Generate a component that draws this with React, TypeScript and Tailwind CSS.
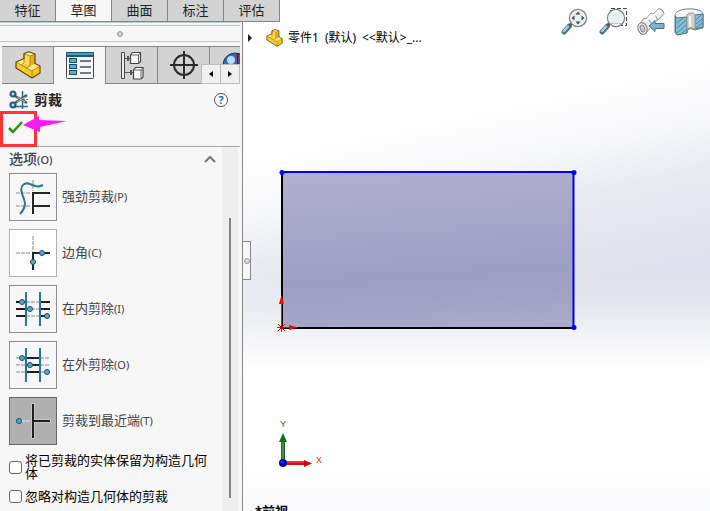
import type { ReactNode } from 'react';

const commandTabs = ['特征', '草图', '曲面', '标注', '评估'];

function PartIcon({ className }: { className: string }) {
  return (
    <svg viewBox="0 0 26 28" className={className} strokeLinejoin="round" aria-hidden="true">
      <path d="M1 11L9 7.500V2.500L14 .800L20 3V12.500L25 15V22L17 27L1 17Z" fill="#f7cb2e" />
      <path d="M1 11L9 7.500L11 8.500V13L6 14Z M11 16.500L20 12.500L25 15L17 20Z" fill="#ffe980" />
      <path d="M9 2.500L14 .800L20 3L15 5Z" fill="#fff0a2" />
      <path d="M15 5L20 3V12.500L15 15Z" fill="#e5b01c" />
      <path d="M9 2.500L15 5V15L9 12Z" fill="#fbd84b" />
      <path d="M17 20L25 15V22L17 27Z" fill="#fac619" />
      <path d="M1 11L17 20V27M17 20L25 15M9 3V12L6 14M9 2.500L15 5L20 3M15 5V15L11 17" fill="none" stroke="#a17b16" strokeWidth=".8" />
      <path d="M1 11L9 7.500V2.500L14 .800L20 3V12.500L25 15V22L17 27L1 17Z" fill="none" stroke="#5f4a12" strokeWidth="1.200" />
    </svg>
  );
}

function PropertyIcon() {
  return (
    <svg viewBox="0 0 28 27" className="h-[27px] w-7" aria-hidden="true">
      <rect x=".5" y=".5" width="27" height="26" rx="1" fill="#f5f6f6" stroke="#414950" />
      <rect x="0" y="0" width="28" height="5" fill="#1b5979" />
      <rect x="1" y="1" width="26" height="2" fill="#4d9bbd" />
      {[7, 13, 19].map((y) => (
        <g key={y}>
          <rect x="3.500" y={y - 0.5} width="7" height="4" fill="#62aacb" stroke="#184e69" />
          <path d={`M14 ${y + 2}H25`} stroke="#484f54" strokeWidth="1.500" />
        </g>
      ))}
    </svg>
  );
}

function ConfigIcon() {
  return (
    <svg viewBox="0 0 24 29" className="h-[29px] w-6" fill="none" aria-hidden="true">
      <path d="M1.500 1.500H4.500V27.500H1.500Z" fill="#eee" stroke="#444" />
      <path d="M5 7.500H10M5 21.500H13" stroke="#555" />
      <path d="M10.500 4L12.500 1.500H20.500V10.500L18.500 12.500H10.500Z M13.500 19L15.500 16.500H23V26L21 28H13.500Z" fill="#fafafa" stroke="#444" strokeWidth="1.200" />
      <path d="M11 4H18.500V12M18.500 4L20.500 1.500M14 19H21V27M21 19L23 16.500" stroke="#666" />
      <path d="M8 5V10M11 19V24" stroke="#555" strokeWidth="2" />
    </svg>
  );
}

function TargetIcon() {
  return (
    <svg viewBox="0 0 28 28" className="size-7" fill="none" stroke="#292b2d" strokeWidth="2" aria-hidden="true">
      <circle cx="14" cy="14" r="10" />
      <path d="M14 0V28M0 14H28" />
    </svg>
  );
}

function TrimIcon() {
  return (
    <svg viewBox="0 0 20 20" className="size-5" fill="none" aria-hidden="true">
      <path d="M13.500 1V19M2 16.500H19" stroke="#286a87" strokeWidth="1.500" />
      <path d="M6 6L18 13M6 13L18 5" stroke="#4d5357" strokeWidth="2.500" />
      <path d="M8 7L16 12M8 12L16 7" stroke="#d4d8da" strokeWidth=".8" />
      <circle cx="4" cy="4" r="2.500" fill="#c5dce6" stroke="#225c79" strokeWidth="2.200" />
      <circle cx="4" cy="15" r="2.500" fill="#c5dce6" stroke="#225c79" strokeWidth="2.200" />
      <path d="M14 9.500H20" stroke="#777" strokeDasharray="2 1" />
    </svg>
  );
}

function Dot({ x, y }: { x: number; y: number }) {
  return <circle cx={x} cy={y} r="2.500" fill="#58a9cd" stroke="#174f6b" />;
}

const glyphs: Record<string, ReactNode> = {
  power: (
    <>
      <path d="M24 7V18M7 20H22M7 33H22" stroke="#c2c2c2" strokeWidth="2" strokeDasharray="4 1" />
      <path d="M24 41V20H41M24 33H41" stroke="#242424" strokeWidth="2" />
      <path d="M11 41C16 36 17 31 15 26C12 19 11 14 14 12C18 8 22 12 26 13C29 14 32 13 34 12" stroke="#28779b" strokeWidth="2" />
    </>
  ),
  corner: (
    <>
      <path d="M24 7V23M7 24H22" stroke="#c2c2c2" strokeWidth="2" strokeDasharray="4 1" />
      <path d="M24 41V24H41" stroke="#242424" strokeWidth="2" />
      <Dot x={33} y={24} /><Dot x={24} y={33} />
    </>
  ),
  inside: (
    <>
      <path d="M17 17H31M17 24H31M17 31H31" stroke="#c2c2c2" strokeWidth="2" strokeDasharray="4 1" />
      <path d="M7 17H17M31 17H41M7 24H17M31 24H41M7 31H17M31 31H41" stroke="#202020" strokeWidth="2" />
      <path d="M17 7V41M31 7V41" stroke="#28779b" strokeWidth="2" />
      <Dot x={13} y={17} /><Dot x={21} y={24} /><Dot x={38} y={31} />
    </>
  ),
  outside: (
    <>
      <path d="M7 17H17M31 17H41M7 24H17M31 24H41M7 31H17M31 31H41" stroke="#c2c2c2" strokeWidth="2" strokeDasharray="4 1" />
      <path d="M17 17H31M17 24H31M17 31H31" stroke="#202020" strokeWidth="2" />
      <path d="M17 7V41M31 7V41" stroke="#28779b" strokeWidth="2" />
      <Dot x={13} y={17} /><Dot x={21} y={24} /><Dot x={38} y={31} />
    </>
  ),
  nearest: (
    <>
      <path d="M24 6V42M24 24H42" stroke="#c7c7c7" strokeWidth="4" />
      <path d="M12 24H22" stroke="#d0d0d0" strokeWidth="2" strokeDasharray="4 1" />
      <path d="M24 7V41M24 24H41" stroke="#202020" strokeWidth="2" />
      <Dot x={10} y={24} />
    </>
  ),
};

const trimModes = [
  { id: 'power', label: '强劲剪裁', hotkey: '(P)', tile: 'border-[#8e8e8e]' },
  { id: 'corner', label: '边角', hotkey: '(C)', tile: 'border-[#b0b0b0] bg-white' },
  { id: 'inside', label: '在内剪除', hotkey: '(I)', tile: 'border-[#8e8e8e]' },
  { id: 'outside', label: '在外剪除', hotkey: '(O)', tile: 'border-[#8e8e8e]' },
  { id: 'nearest', label: '剪裁到最近端', hotkey: '(T)', tile: 'border-[#666] bg-[#b0b0b0]' },
];

function Magnifier({ area }: { area?: boolean }) {
  return (
    <svg viewBox="0 0 30 28" className="h-7 w-[30px]" fill="none" aria-hidden="true">
      {area && <path d="M12.500 6V.500H28.500V17.500H23" stroke="#444" strokeDasharray="4 2" />}
      <path d="M9.500 18L4 24" stroke="#4a7282" strokeWidth="5" strokeLinecap="round" />
      <path d="M8 18.500L4 23" stroke="#9ed2e5" strokeWidth="2.500" strokeLinecap="round" />
      <path d="M9.500 18L12 15" stroke="#555" strokeWidth="2.500" />
      <circle cx="18" cy="10" r="8.500" fill="#e7eff1" stroke="#818688" strokeWidth="1.500" />
      <circle cx="18" cy="10" r="7.200" stroke="#fafafa" />
      {!area && <path d="M18 3.500L15.500 6.500H20.500ZM18 16.500L15.500 13.500H20.500ZM11.500 10L14.500 7.500V12.500ZM24.500 10L21.500 7.500V12.500Z" fill="#454d51" />}
      {area && <path d="M13 15.500H23" stroke="#b6babc" strokeDasharray="3 1" />}
    </svg>
  );
}

function PreviousViewIcon() {
  return (
    <svg viewBox="0 0 30 28" className="h-7 w-[30px]" strokeLinejoin="round" aria-hidden="true">
      <path d="M14 9L23 .500Q27 1 28 5.500L21 13Z" fill="#eee" stroke="#8b8b8b" />
      <path d="M8 13L15 5Q20 6 21.500 12L14 19Z" fill="#f3f3f3" stroke="#999" />
      <path d="M2 18L8 10Q15 11 16 18L9 26Z" fill="#eee" stroke="#8b8b8b" />
      <path d="M10 13L16 7M17 8L24 2" stroke="#fff" strokeWidth="2" />
      <ellipse cx="6.500" cy="20.500" rx="4.500" ry="6" fill="#f5f5f5" stroke="#777" transform="rotate(-20 6.500 20.500)" />
      <ellipse cx="6.500" cy="20.500" rx="2.200" ry="3.500" fill="#ccc" stroke="#888" transform="rotate(-20 6.500 20.500)" />
      <path d="M13 18L19 12.500V15.500H28V20.500H19V23.500Z" fill="#79b5cf" stroke="#496f80" />
    </svg>
  );
}

function SectionIcon() {
  return (
    <svg viewBox="0 0 30 28" className="h-7 w-[30px]" strokeLinejoin="round" aria-hidden="true">
      <path d="M1 7C2 -1 28 -1 29 6V20L21 22Q17 19 13 22V25L1 25Z" fill="#f5f5f5" stroke="#777" />
      <path d="M1.500 8L3 10L13 9V25L3 27L1.500 24Z" fill="#86bed7" stroke="#477486" />
      <path d="M21 7L29 6V19L21 21Z" fill="#86bed7" stroke="#477486" />
      <path d="M3 15L9 10M3 20L12 12M3 25L12 17M8 25L12 22M22 12L27 7M22 16L28 11M22 20L28 15" stroke="#34758e" strokeWidth=".8" />
      <path d="M13 9Q12 5 17 5Q22 5 21 8V21Q17 18 13 21Z" fill="#cfcfcf" stroke="#999" />
      <path d="M16 8V19" stroke="#f4f4f4" strokeWidth="2" />
    </svg>
  );
}

const viewTools = [
  { name: '整屏显示', icon: <Magnifier /> },
  { name: '局部放大', icon: <Magnifier area /> },
  { name: '上一视图', icon: <PreviousViewIcon /> },
  { name: '剖面视图', icon: <SectionIcon /> },
];

function SketchCanvas() {
  return (
    <svg className="absolute inset-0 size-full" role="img" aria-label="矩形草图">
      <defs>
        <linearGradient id="face" x1=".4" y1="0" x2=".52" y2="1">
          <stop offset="0" stopColor="#b0aece" />
          <stop offset=".65" stopColor="#9d9fc3" />
          <stop offset=".8" stopColor="#a0a1c4" />
          <stop offset="1" stopColor="#a9a8ca" />
        </linearGradient>
        <linearGradient id="green"><stop stopColor="#075c10" /><stop offset=".5" stopColor="#58a45b" /><stop offset="1" stopColor="#00520a" /></linearGradient>
      </defs>
      <g transform="translate(-243 0)">
        <rect x="282" y="172" width="292" height="156" fill="url(#face)" />
        <path d="M282 172V328H574" fill="none" stroke="#000" strokeWidth="2" />
        <path d="M282 172H573.500V328" fill="none" stroke="#0000fa" strokeWidth="2" />
        <g fill="#0000fa"><circle cx="282" cy="172.500" r="2.500" /><circle cx="574" cy="172.500" r="2.500" /><circle cx="574" cy="327.500" r="2.500" /></g>
        <path d="M281.500 327V302M282 327.500H291" stroke="#f00" />
        <path d="M281.500 295L284 304H279ZM298 327.500L289 325V330Z" fill="#f00" />
        <path d="M278 324L285 331M278 331L285 324M281.500 323V332M277 327.500H286" stroke="#f00" />
        <rect x="280" y="326" width="3" height="3" fill="#a00" />
        <rect x="281" y="441" width="4" height="20" fill="url(#green)" />
        <path d="M283 433L287 442H279Z" fill="#087414" />
        <path d="M286 463H306" stroke="#d81313" strokeWidth="4" />
        <path d="M286 462H305" stroke="#fa5555" />
        <path d="M312 463.500L304 460V467Z" fill="#c90808" />
        <circle cx="283" cy="463" r="4" fill="#0505b8" />
        <circle cx="282" cy="462" r="1.500" fill="#2929ef" />
        <text x="280" y="427" fontSize="9" fill="#087a16" fontFamily="Liberation Sans, sans-serif">Y</text>
        <text x="316" y="463" fontSize="9" fill="#f22" fontFamily="Liberation Sans, sans-serif">X</text>
      </g>
    </svg>
  );
}

export default function App() {
  return (
    <div className="relative flex h-screen overflow-hidden bg-white font-['Noto_Sans','Noto_Sans_CJK_SC',sans-serif] text-[13px] text-[#222]">
      <nav className="absolute top-0 left-0 z-10 flex h-[22px] border-b border-[#858585]" aria-label="命令选项卡">
        {commandTabs.map((tab) => (
          <button key={tab} className={`w-14 border-r border-[#858585] pb-0.5 leading-5 ${tab === '草图' ? 'bg-[#f7f7f7]' : 'bg-[#d3d3d3]'}`}>{tab}</button>
        ))}
      </nav>

      <aside className="flex w-[243px] shrink-0 flex-col border-r border-[#858585] bg-[#f7f7f7] pt-[22px]">
        <div className="mr-0.5 flex h-5 flex-col border-t border-b border-t-[#b4cfd2] border-b-[#c4c4c4] pt-0.5">
          <div className="flex flex-1 items-center justify-center border-t border-[#c4c4c4]">
            <span className="size-[6px] rounded-full border border-[#999] bg-[#d3d3d3]" />
          </div>
        </div>
        <div className="relative mt-1 mr-0.5 ml-0.5 flex h-[38px] overflow-hidden">
          {[<PartIcon key="part" className="h-7 w-[26px]" />, <PropertyIcon key="property" />, <ConfigIcon key="config" />, <TargetIcon key="target" />].map((icon, i) => (
            <button key={i} aria-label={['设计树', '属性管理器', '配置管理器', '尺寸专家'][i]} className={`flex w-[52px] shrink-0 items-center justify-center border-t border-r border-[#858585] ${i === 1 ? 'bg-[#f7f7f7]' : 'border-b bg-[#d3d3d3]'}`}>{icon}</button>
          ))}
          <button aria-label="外观管理器" className="w-[52px] shrink-0 border-y border-[#858585] bg-[#d3d3d3] pl-3">
            <svg viewBox="0 0 26 26" className="size-[26px]" aria-hidden="true">
              <circle cx="13" cy="13" r="12" fill="#2d6ac0" stroke="#153860" />
              <path d="M15 1.500A12 12 0 0 1 25 13H16Z" fill="#d92032" stroke="#222" />
              <circle cx="9" cy="8" r="4" fill="#b9dcf5" />
            </svg>
          </button>
          <div className="absolute right-0 bottom-0 flex h-5 w-[39px] border border-[#bcbcbc] bg-[#f0f0f0]">
            <button aria-label="向左" className="flex flex-1 items-center justify-center border-r border-[#bcbcbc]"><svg viewBox="0 0 4 6" className="h-[6px] w-1"><path d="M4 0V6L0 3Z" /></svg></button>
            <button aria-label="向右" className="flex flex-1 items-center justify-center"><svg viewBox="0 0 4 6" className="h-[6px] w-1"><path d="M0 0V6L4 3Z" /></svg></button>
          </div>
        </div>

        <header className="relative mr-0.5 h-[63px] shrink-0 border-b border-[#a5a5a5]">
          <div className="flex h-8 items-center pr-3 pl-[9px]">
            <TrimIcon />
            <h1 className="ml-[5px] flex-1 text-sm leading-5 font-bold">剪裁</h1>
            <button aria-label="帮助" className="flex size-[14px] items-center justify-center rounded-full border border-[#4c5357] bg-white text-[11px] leading-3 font-bold text-[#216b8d]">?</button>
          </div>
          <button aria-label="确定" className="absolute top-[27px] left-0 h-9 w-[37px] border-3 border-[#fb3434] pb-1 pl-[5px]">
            <svg viewBox="0 0 15 13" className="h-[13px] w-[15px]" aria-hidden="true"><path d="M1 7L5 11L14 1" fill="none" stroke="#299307" strokeWidth="2.500" /></svg>
          </button>
          <svg viewBox="0 0 44 17" className="absolute top-8 left-[23px] h-[17px] w-11" aria-hidden="true"><path d="M0 9L16 0V4L44 5L17 11V16Z" fill="#f81af5" /></svg>
        </header>

        <div className="mr-1 flex min-h-0 flex-1">
          <section className="min-w-0 flex-1 pl-[9px]">
            <div className="flex h-[26px] items-center justify-between pr-1.5 pb-0.5 text-[#444]">
              <h2 className="text-sm leading-5 font-medium">选项<span className="text-[11px]">(O)</span></h2>
              <button aria-label="折叠选项"><svg viewBox="0 0 12 8" className="h-2 w-3" aria-hidden="true"><path d="M1 7L6 2L11 7" fill="none" stroke="#777" strokeWidth="2" /></svg></button>
            </div>
            <div role="radiogroup" aria-label="剪裁选项" className="flex flex-col gap-2">
              {trimModes.map((mode) => (
                <label key={mode.id} className="flex items-center gap-[5px] text-[#444]">
                  <span className="grid size-12">
                    <input type="radio" name="trim-mode" defaultChecked={mode.id === 'nearest'} className={`col-start-1 row-start-1 size-12 appearance-none border ${mode.tile}`} />
                    <svg viewBox="0 0 48 48" className="pointer-events-none col-start-1 row-start-1 size-12" fill="none" aria-hidden="true">{glyphs[mode.id]}</svg>
                  </span>
                  <span className="pb-0.5 leading-5">{mode.label}<span className="text-[11px]">{mode.hotkey}</span></span>
                </label>
              ))}
            </div>
            <div className="mt-2 flex flex-col gap-2.5 pt-px pr-2 text-black">
              {['将已剪裁的实体保留为构造几何体', '忽略对构造几何体的剪裁'].map((text) => (
                <label key={text} className="flex items-center gap-[3px]">
                  <input type="checkbox" className="size-[13px] shrink-0 appearance-none rounded-[3px] border border-[#666] bg-white" />
                  <span className="leading-[13px]">{text}</span>
                </label>
              ))}
            </div>
          </section>
          <div className="flex w-4 shrink-0 justify-center bg-[#eee] pt-[71px] pb-[13px]">
            <span className="w-0.5 bg-[#858585]" />
          </div>
        </div>
      </aside>

      <main className="relative min-w-0 flex-1 overflow-hidden bg-[linear-gradient(168deg,#ffffff_25%,#ffffffb8_36%,#ffffff50_44%,#ffffff00_58%),linear-gradient(180deg,#dfe2ec_54%,#e5e8ef_60%,#f4f5f8_66%,#ffffff_73%,#ffffff_90%,#f8f9fb_100%)]">
        <SketchCanvas />
        <div className="relative flex items-start justify-between pt-2 pr-1.5 pl-[5px]">
          <button className="mt-5 flex items-center text-xs leading-5 text-black">
            <svg viewBox="0 0 4 8" className="h-2 w-1" aria-hidden="true"><path d="M0 0V8L4 4Z" fill="#222" /></svg>
            <PartIcon className="ml-3.5 h-[18px] w-[17px]" />
            <span className="ml-[5px] flex gap-1.5"><span>零件1</span><span>(默认)</span><span>&lt;&lt;默认&gt;_...</span></span>
          </button>
          <div className="flex gap-2">
            {viewTools.map((tool) => <button key={tool.name} aria-label={tool.name}>{tool.icon}</button>)}
          </div>
        </div>
        <button aria-label="收起面板" className="absolute top-[241px] left-0 flex h-[39px] w-2 items-center justify-center border border-l-0 border-[#858585] bg-[#f7f7f7]">
          <span className="size-[6px] shrink-0 rounded-full border border-[#999] bg-[#ddd]" />
        </button>
        <p className="absolute -bottom-2.5 left-3 text-[13px] leading-5 font-bold text-black">*前视</p>
      </main>
    </div>
  );
}
